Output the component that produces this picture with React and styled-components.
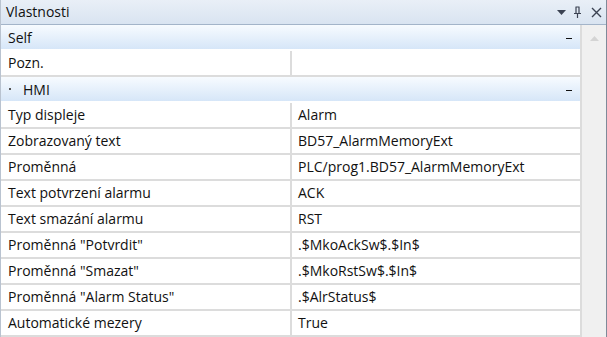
import styled, { createGlobalStyle } from "styled-components";

const Global = createGlobalStyle`
  html, body {
    margin: 0;
    padding: 0;
    overflow: hidden;
    background: #ffffff;
  }
  body {
    font-family: "Open Sans", "Noto Sans", sans-serif;
    font-size: 14px;
    color: #111111;
  }
`;

const Panel = styled.div`
  width: 607px;
  height: 337px;
  display: flex;
  flex-direction: column;
  box-sizing: border-box;
  border-left: 1px solid #b9c3d0;
  border-right: 1px solid #7f8a99;
  overflow: hidden;
  background: #ffffff;
`;

const TitleBar = styled.div`
  height: 24px;
  flex: none;
  display: flex;
  align-items: center;
  padding: 0 4px 0 5px;
  background: linear-gradient(#e9eff7, #d9e4f1);
  border-bottom: 1px solid #a3b4c9;
`;

const Title = styled.span`
  flex: 1;
  line-height: 24px;
`;

const TitleButton = styled.span`
  width: ${(p) => p.$w}px;
  height: 14px;
  display: flex;
  align-items: center;
  justify-content: center;
  margin-left: ${(p) => p.$gap}px;
  flex: none;
`;

const Body = styled.div`
  flex: 1;
  display: flex;
  min-height: 0;
`;

const Grid = styled.div`
  width: 581px;
  flex: none;
  display: flex;
  flex-direction: column;
  border-right: 2px solid #dcdcdc;
  box-sizing: border-box;
`;

const Scrollbar = styled.div`
  flex: 1;
  background: #f0f0f0;
  display: flex;
  justify-content: center;
  align-items: flex-start;
  padding-top: 11px;
`;

const Category = styled.div`
  height: 24px;
  flex: none;
  display: flex;
  align-items: center;
  padding: 0 8px 0 ${(p) => (p.$dot ? "8px" : "7px")};
  background: linear-gradient(#f7fbff, #d6e6f8);
  border-bottom: 2px solid #ffffff;
`;

const CatName = styled.span`
  flex: 1;
`;

const Dot = styled.span`
  display: inline-block;
  width: 2px;
  height: 2px;
  background: #555;
  margin-right: 12px;
`;

const Minus = styled.span`
  width: 6px;
  height: 1px;
  background: #111;
  margin-top: 2px;
`;

const Row = styled.div`
  height: 24px;
  flex: none;
  display: grid;
  grid-template-columns: 291px 1fr;
  border-bottom: 2px solid #dcdcdc;
`;

const Cell = styled.div`
  padding-left: ${(p) => (p.$value ? "6px" : "7px")};
  line-height: 24px;
  white-space: nowrap;
  overflow: hidden;
  border-right: ${(p) => (p.$value ? "none" : "2px solid #dcdcdc")};
`;

function Group({ name, dot, rows }) {
  return (
    <>
      <Category $dot={dot}>
        {dot && <Dot />}
        <CatName>{name}</CatName>
        <Minus />
      </Category>
      {rows.map(([label, value]) => (
        <Row key={label}>
          <Cell>{label}</Cell>
          <Cell $value>{value}</Cell>
        </Row>
      ))}
    </>
  );
}

export default function App() {
  const hmi = [
    ["Typ displeje", "Alarm"],
    ["Zobrazovaný text", "BD57_AlarmMemoryExt"],
    ["Proměnná", "PLC/prog1.BD57_AlarmMemoryExt"],
    ["Text potvrzení alarmu", "ACK"],
    ["Text smazání alarmu", "RST"],
    ['Proměnná "Potvrdit"', ".$MkoAckSw$.$In$"],
    ['Proměnná "Smazat"', ".$MkoRstSw$.$In$"],
    ['Proměnná "Alarm Status"', ".$AlrStatus$"],
    ["Automatické mezery", "True"],
  ];

  return (
    <>
      <Global />
      <Panel>
        <TitleBar>
          <Title>Vlastnosti</Title>
          <TitleButton $w={9} $gap={0}>
            <svg width="9" height="5" viewBox="0 0 9 5">
              <path d="M0 0h9L4.5 5z" fill="#3b4252" />
            </svg>
          </TitleButton>
          <TitleButton $w={10} $gap={6}>
            <svg width="9" height="12" viewBox="0 0 9 12">
              <path
                d="M2.5 1h4M3 1v6M6 1v6M1 7.5h7M4.5 8v4"
                stroke="#3b4252"
                strokeWidth="1.2"
                fill="none"
              />
            </svg>
          </TitleButton>
          <TitleButton $w={12} $gap={8}>
            <svg width="11" height="11" viewBox="0 0 11 11">
              <path d="M1 1l9 9M10 1l-9 9" stroke="#3b4252" strokeWidth="1.4" />
            </svg>
          </TitleButton>
        </TitleBar>
        <Body>
          <Grid>
            <Group name="Self" rows={[["Pozn.", ""]]} />
            <Group name="HMI" dot rows={hmi} />
          </Grid>
          <Scrollbar>
            <svg width="9" height="5" viewBox="0 0 9 5">
              <path d="M0 5h9L4.5 0z" fill="#d4d4d4" />
            </svg>
          </Scrollbar>
        </Body>
      </Panel>
    </>
  );
}
